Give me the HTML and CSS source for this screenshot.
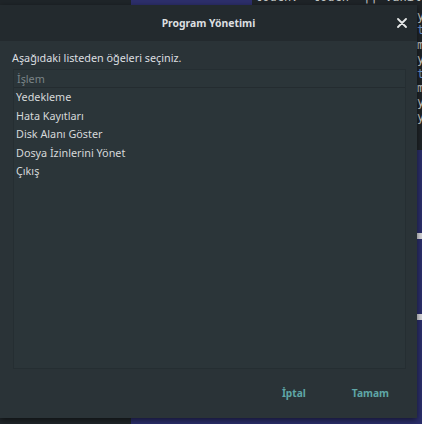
FILE: index.html
```html
<!DOCTYPE html>
<html lang="tr">
<head>
<meta charset="utf-8">
<link rel="stylesheet" href="styles.css">
</head>
<body>
<div class="desktop">
  <div class="topstrip">
    <div class="col-dark"></div>
    <div class="col-purple"></div>
    <div class="top-editor"><div class="top-line">touch: 'touch' || vanillam</div></div>
  </div>
  <div class="middle">
    <div class="dialog">
      <div class="titlebar">
        <span class="title">Program Yönetimi</span>
        <svg class="close" width="10" height="10" viewBox="0 0 10 10"><path d="M1 1 L9 9 M9 1 L1 9" stroke="#e6e8e8" stroke-width="1.8" stroke-linecap="round"/></svg>
      </div>
      <div class="body">
        <div class="label">Aşağıdaki listeden öğeleri seçiniz.</div>
        <div class="list">
          <div class="list-head">İşlem</div>
          <div class="row">Yedekleme</div>
          <div class="row">Hata Kayıtları</div>
          <div class="row">Disk Alanı Göster</div>
          <div class="row">Dosya İzinlerini Yönet</div>
          <div class="row">Çıkış</div>
        </div>
        <div class="actions">
          <span class="btn">İptal</span>
          <span class="btn">Tamam</span>
        </div>
      </div>
    </div>
    <div class="side">
      <div class="side-code">
        <div class="ln">y</div>
        <div class="ln kw">t</div>
        <div class="ln">m</div>
        <div class="ln">y</div>
        <div class="ln kw">t</div>
        <div class="ln">m</div>
        <div class="ln">y</div>
        <div class="ln">y</div>
      </div>
      <div class="side-rest">
        <span class="mark"></span>
        <span class="mark"></span>
      </div>
    </div>
  </div>
  <div class="bottomstrip">
    <div class="col-dark"></div>
    <div class="bottom-purple"></div>
  </div>
</div>
</body>
</html>
```

FILE: styles.css
```css
html, body {
  margin: 0;
  padding: 0;
  width: 422px;
  height: 424px;
  overflow: hidden;
  font-family: "Noto Sans", "DejaVu Sans", sans-serif;
  background: #2b2e6a;
}
.desktop {
  display: flex;
  flex-direction: column;
  width: 422px;
  height: 424px;
}
.topstrip {
  height: 5px;
  display: flex;
  overflow: hidden;
}
.col-dark {
  width: 131px;
  background: #1f2529;
}
.col-purple {
  width: 121px;
  background: #2d2f6c;
}
.top-editor {
  flex: 1;
  background: #1f2428;
  overflow: hidden;
}
.top-line {
  margin-top: -10px;
  padding-left: 3px;
  font-family: "DejaVu Sans Mono", monospace;
  font-size: 12px;
  line-height: 14px;
  color: #c5c8c6;
  white-space: pre;
}
.middle {
  height: 413px;
  display: flex;
}
.dialog {
  width: 417px;
  background: #2a3337;
  box-shadow: 0 2px 6px rgba(0,0,0,0.55);
  display: flex;
  flex-direction: column;
  position: relative;
  z-index: 1;
}
.side {
  flex: 1;
  display: flex;
  flex-direction: column;
  overflow: hidden;
}
.side-code {
  height: 145px;
  background: #1f2428;
  padding-top: 4px;
  box-sizing: border-box;
  font-family: "DejaVu Sans Mono", monospace;
  font-size: 12px;
  line-height: 14.4px;
  color: #c5c8c6;
}
.ln.kw { color: #6a8fc8; }
.side-rest {
  flex: 1;
  background: #2b2e6a;
  display: flex;
  flex-direction: column;
  gap: 75px;
  padding-top: 83px;
}
.mark {
  display: block;
  width: 6px;
  height: 6px;
  background: #d4d4d8;
}
.bottomstrip {
  flex: 1;
  display: flex;
}
.bottom-purple {
  flex: 1;
  background: #2b2e6a;
}
.titlebar {
  height: 36px;
  background: #232a2e;
  display: flex;
  align-items: center;
  justify-content: center;
  position: relative;
}
.title {
  color: #dcdfe0;
  font-size: 10.4px;
  font-weight: 700;
}
.close {
  position: absolute;
  right: 10px;
  top: 13px;
}
.body {
  flex: 1;
  display: flex;
  flex-direction: column;
  padding: 9px 11px 0 12px;
}
.label {
  color: #dcdfe0;
  font-size: 10.8px;
  line-height: 16px;
  margin-bottom: 3px;
}
.list {
  height: 298px;
  margin-left: 1px;
  background: #2b3539;
  border: 1px solid #252e32;
  display: flex;
  flex-direction: column;
}
.list-head {
  height: 17px;
  line-height: 17px;
  padding-left: 3px;
  color: #7a8487;
  font-size: 10.8px;
  border-bottom: 1px solid #242c30;
}
.row {
  height: 18.6px;
  line-height: 18.6px;
  padding-left: 2px;
  color: #d6d9da;
  font-size: 10.8px;
}
.actions {
  display: flex;
  justify-content: flex-end;
  gap: 46px;
  padding: 17px 17px 0 0;
}
.btn {
  color: #5fa6a6;
  font-weight: 700;
  font-size: 10.2px;
}
```
